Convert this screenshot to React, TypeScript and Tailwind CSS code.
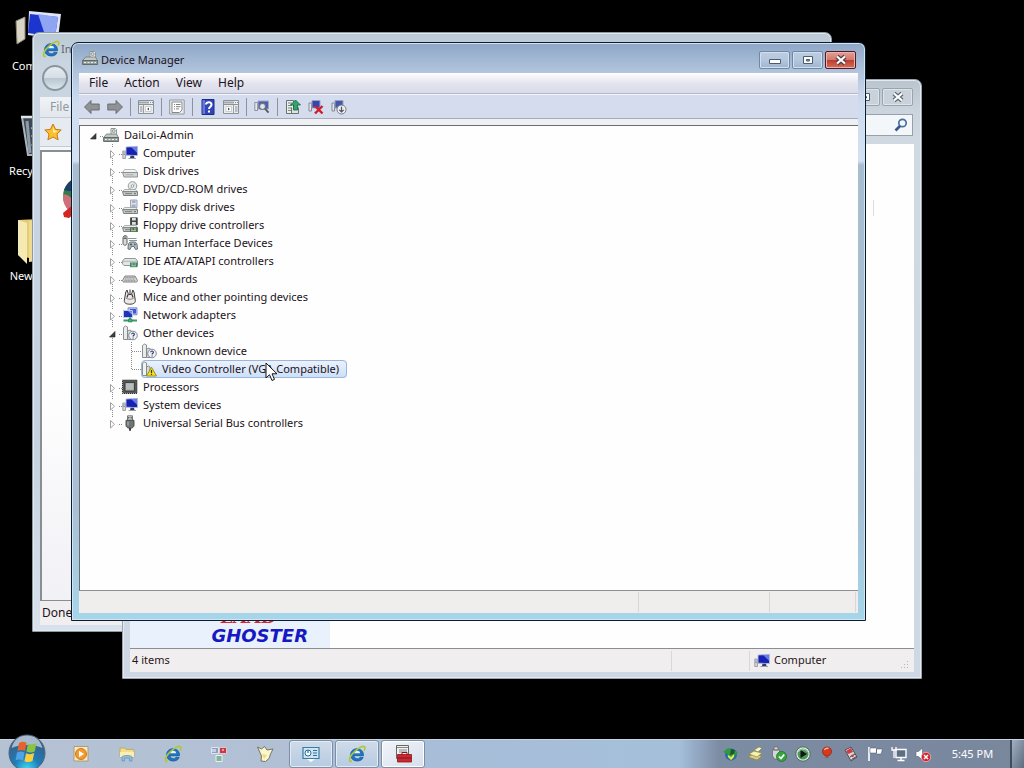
import React from 'react';

type IconProps = { className?: string };

/* ---------- Icons ---------- */

const MonitorIcon: React.FC<IconProps> = ({ className = 'w-4 h-4' }) => (
  <svg viewBox="0 0 16 16" className={className}>
    <path d="M.8 6h2.700v7.500H.8z" fill="#d5d8dc" stroke="#8b9198" strokeWidth="0.8" />
    <path d="M1.200 8h2M1.200 9.500h2" stroke="#777" strokeWidth="0.6" />
    <path d="M4 2l11.500-.6v9.200L4 10.200z" fill="#1522b4" stroke="#b4bddc" strokeWidth="0.9" />
    <path d="M9 2l6-.3v6z" fill="#7f92f0" opacity="0.8" />
    <path d="M8.500 10.700h3.500l.5 2.300H8z" fill="#2f3b66" />
    <path d="M6.500 13.500h7.500" stroke="#9aa0a8" />
  </svg>
);

const RootIcon: React.FC<IconProps> = ({ className = 'w-4 h-4' }) => (
  <svg viewBox="0 0 16 16" className={className}>
    <path d="M8 1.500h4.500l1 1v5H8z" fill="#eef0f0" stroke="#87908f" strokeWidth="0.9" />
    <circle cx="10.700" cy="4" r="1.500" fill="#dfe4cf" stroke="#6d7572" strokeWidth="0.7" />
    <path d="M3.500 7h10l2 3.500H.7z" fill="#c2c8c6" stroke="#6f7877" strokeWidth="0.8" />
    <path d="M.6 10.500h15v4H.6z" fill="#919b99" stroke="#5b6462" strokeWidth="0.9" />
    <path d="M2 12.500h2M5.500 12.500h2M9 12.500h2M12.500 12.500h1.500" stroke="#e9eeec" strokeWidth="1.200" />
  </svg>
);

const driveBody = (
  <>
    <path d="M2.500 8.500h11l2 2.200H.6z" fill="#eceeee" stroke="#9aa09f" strokeWidth="0.8" />
    <path d="M.6 10.700h14.900v3.800H1.600z" fill="#c8cdcc" stroke="#6f7675" strokeWidth="0.9" />
    <path d="M3 12.700h7" stroke="#767d7c" />
    <path d="M12 12.700h2" stroke="#55705c" />
  </>
);

const DiskIcon: React.FC = () => (
  <svg viewBox="0 0 16 16" className="w-4 h-4">
    <path d="M2.500 6.500h10.500l2.500 3H.6z" fill="#f4f4f4" stroke="#a5a9a9" strokeWidth="0.8" />
    <path d="M.6 9.500h14.900v4.500H2z" fill="#d3d6d6" stroke="#858a8a" strokeWidth="0.9" />
    <path d="M3.500 11.800h8" stroke="#a7abab" />
  </svg>
);

const DvdIcon: React.FC = () => (
  <svg viewBox="0 0 16 16" className="w-4 h-4">
    <circle cx="10.500" cy="5" r="4.300" fill="#e7eaea" stroke="#8c9393" strokeWidth="0.9" />
    <path d="M10.500 5l3-2.800M10.500 5l-2.500 3" stroke="#b4bcc0" />
    <circle cx="10.500" cy="5" r="1.300" fill="#fff" stroke="#7d8484" strokeWidth="0.7" />
    {driveBody}
  </svg>
);

const FloppyIcon: React.FC = () => (
  <svg viewBox="0 0 16 16" className="w-4 h-4">
    <path d="M8.500 1h6.500v7.500H8.500z" fill="#dfe3ef" stroke="#8a91a5" strokeWidth="0.8" />
    <path d="M10 1.500h3.500v2.500H10zM9.700 5.500h4v2.500h-4z" fill="#a5aec8" />
    {driveBody}
  </svg>
);

const FloppyControllerIcon: React.FC = () => (
  <svg viewBox="0 0 16 16" className="w-4 h-4">
    <path d="M8.500 .8h6.800v7H8.500z" fill="#3f4644" stroke="#222" strokeWidth="0.6" />
    <path d="M10 1h3.800v2.500H10zM10 5h3.800v2.800H10z" fill="#dde1df" />
    {driveBody}
    <path d="M8 10.500h7.500v4.500H8z" fill="#4f6d52" />
    <path d="M9 12h1.500M12 12h2M9 13.700h5" stroke="#c9d9c3" strokeWidth="0.9" />
  </svg>
);

const HidIcon: React.FC = () => (
  <svg viewBox="0 0 16 16" className="w-4 h-4">
    <path d="M1 3c0-1.500 1-2.500 2.500-2.500S5 2 5 3v5.500c0 1-.8 1.700-2 1.700S1 9.500 1 8.500z" fill="#d9dcdc" stroke="#4e5454" strokeWidth="0.9" />
    <path d="M1.500 3.500h3M3 1v3" stroke="#5e6464" />
    <path d="M6 3.500h8.500M7 5.500h8" stroke="#8e9595" strokeWidth="1.200" />
    <path d="M6 14c0-4 .5-7 3-7h3.500c2.500 0 3 3.500 3 7l-2 .5-1.500-3h-2.500l-1.500 3z" fill="#aeb9bf" stroke="#5b666b" strokeWidth="0.9" />
    <circle cx="9" cy="9.500" r="0.900" fill="#444" />
    <circle cx="12.800" cy="9.500" r="0.900" fill="#54697e" />
  </svg>
);

const IdeIcon: React.FC = () => (
  <svg viewBox="0 0 16 16" className="w-4 h-4">
    <path d="M2.500 5.500h11l2 2.500v4.500H2L.6 11V8z" fill="#e2e6e4" stroke="#868d8a" strokeWidth="0.9" />
    <path d="M1 8.300h14" stroke="#a4aaa7" strokeWidth="0.8" />
    <path d="M8 9.500h7.500v4.700H8z" fill="#3d8561" />
    <path d="M9.300 11h2M12.500 11h1.500M9.300 12.800h4.700" stroke="#cfe6d8" strokeWidth="0.800" />
  </svg>
);

const KeyboardIcon: React.FC = () => (
  <svg viewBox="0 0 16 16" className="w-4 h-4">
    <path d="M3 5h10l2.500 4.500c0 1-.7 1.500-1.500 1.500H2C1 11 .5 10.500.5 9.500z" fill="#d2d4d4" stroke="#777" strokeWidth="0.9" />
    <path d="M3.500 6.500h9M3 8h10M2.500 9.500h11" stroke="#777" strokeWidth="0.700" strokeDasharray="1 0.6" />
  </svg>
);

const MouseIcon: React.FC = () => (
  <svg viewBox="0 0 16 16" className="w-4 h-4">
    <path d="M5 1L3.800 3 2.300 11.500c-.3 2.300 1.700 3.700 5.500 3.700s5.800-1.400 5.500-3.700L12 3l-1.200-2L9.500 5.500h-3z" fill="#eceae8" stroke="#3f3c3a" strokeLinejoin="round" />
    <path d="M6 5.500l-1 3M10 5.500l1 3" stroke="#3f3c3a" strokeWidth="1.200" />
    <path d="M3.800 9c2.500 1.700 5.800 1.700 8 0" fill="none" stroke="#8a8583" />
    <path d="M8 .5v5" stroke="#333" />
  </svg>
);

const NetworkIcon: React.FC = () => (
  <svg viewBox="0 0 16 16" className="w-4 h-4">
    <path d="M6 .8h9v7H6z" fill="#b9c6ee" stroke="#7c8dc3" strokeWidth="0.9" />
    <path d="M8 2h6v4.500H8z" fill="#3d57d8" />
    <path d="M1.500 3.500h9v7h-9z" fill="#1f34b8" stroke="#c1cae6" />
    <path d="M6 4l4 .2v3.500z" fill="#8799ee" />
    <path d="M8 10.500v2.500M1.500 13.500h13.500" stroke="#3a9a63" strokeWidth="2" />
    <path d="M6.500 12h3.500v3H6.500z" fill="#3fb577" stroke="#25754b" strokeWidth="0.600" />
  </svg>
);

const UnknownIcon: React.FC = () => (
  <svg viewBox="0 0 16 16" className="w-4 h-4">
    <path d="M1.500 2.500l2-1.500 2 1v12.500h-4z" fill="#e9ebeb" stroke="#7f8585" strokeWidth="0.900" />
    <path d="M5.500 6l2.500-1 1.500 1v8.500H5.500z" fill="#d6d9d9" stroke="#7f8585" strokeWidth="0.900" />
    <circle cx="11" cy="10.500" r="4.300" fill="#eef1f6" stroke="#777f8c" strokeWidth="0.900" />
    <path d="M9.700 9.300c0-1.800 2.700-1.700 2.700 0 0 1-1.300 1-1.300 2.200M11.100 12.400v1" fill="none" stroke="#2f3c66" strokeWidth="1.100" />
  </svg>
);

const WarnIcon: React.FC = () => (
  <svg viewBox="0 0 16 16" className="w-4 h-4">
    <path d="M1.500 2.500l2-1.500 2 1v12.500h-4z" fill="#f2f2ea" stroke="#7f8585" strokeWidth="0.900" />
    <path d="M5.500 6l2-1 1.500 1v8.500H5.500z" fill="#d6d9d9" stroke="#7f8585" strokeWidth="0.900" />
    <path d="M10.500 6.200l5 8.800h-10z" fill="#f2e21c" stroke="#93881a" strokeWidth="0.900" strokeLinejoin="round" />
    <path d="M10.500 9v3.200M10.500 13v1.100" stroke="#3d3900" strokeWidth="1.200" />
  </svg>
);

const CpuIcon: React.FC = () => (
  <svg viewBox="0 0 16 16" className="w-4 h-4">
    <path d="M.5 1h14.500v13.500H.5z" fill="#565a58" />
    <path d="M.5 1h14.500v13.500H.5z" fill="none" stroke="#2d302e" strokeDasharray="1 1" />
    <path d="M3 3.500h9.500v8.500H3z" fill="#a4aaa8" stroke="#222" strokeWidth="0.700" />
    <path d="M4 4.500h7v6H4z" fill="#b8bebc" />
  </svg>
);

const UsbIcon: React.FC = () => (
  <svg viewBox="0 0 16 16" className="w-4 h-4">
    <path d="M5.500.8h5v4.500h-5z" fill="#d5d7d7" stroke="#666b6b" strokeWidth="0.900" />
    <path d="M6.800 2v1.500M9.200 2v1.500" stroke="#333" />
    <path d="M4 5.300h8v5c0 2-2 3-4 3s-4-1-4-3z" fill="#6f7574" stroke="#424746" strokeWidth="0.900" />
    <path d="M6 6.500v4" stroke="#b0b5b4" strokeWidth="1.200" />
    <path d="M8 13v2.800" stroke="#2d3130" strokeWidth="1.800" />
  </svg>
);

const IeIcon: React.FC<IconProps> = ({ className = 'w-4 h-4' }) => (
  <svg viewBox="0 0 16 16" className={className}>
    <path d="M13.800 9.500H5.300c.2 3 4.300 3.500 5.400 1.300l2.800.3c-1.500 4.700-11.200 4.400-11.200-2.500 0-7.200 12-7.400 11.500.9z" fill="#2076c4" stroke="#0b4f8d" strokeWidth="0.600" />
    <path d="M5.300 7.300h5.500c-.3-2.800-5-2.800-5.500 0z" fill="#e8f5ff" />
    <path d="M3.500 14.300C.6 15.500.6 12 3.500 8.300 7 4 12.700.2 14.500 1.500c1 .7.300 2.500-.4 3.500" fill="none" stroke="#b3c63a" strokeWidth="1.500" />
  </svg>
);

const Arrow: React.FC<{ flip?: boolean }> = ({ flip }) => (
  <svg viewBox="0 0 16 16" className="w-4 h-4">
    <path
      d={flip ? 'M15.500 8L9 1.500v3.500H.8v6H9v3.500z' : 'M.5 8L7 1.500v3.500h8.200v6H7v3.500z'}
      fill="#8f9395"
      stroke="#64686a"
      strokeWidth="0.900"
    />
  </svg>
);

const PaneIcon: React.FC<{ right?: boolean }> = ({ right }) => (
  <svg viewBox="0 0 16 16" className="w-4 h-4">
    <path d="M.5 1.500h15v13H.5z" fill="#eceded" stroke="#8c9196" />
    <path d="M1 3.500h10" stroke="#a3a8ad" strokeWidth="2" />
    <path d="M12 3.500h1M14 3.500h1" stroke="#8a9096" />
    <path d="M1 5.500h14" stroke="#8c9196" />
    <path d={right ? 'M10.500 6v8.500' : 'M5.500 6v8.500'} stroke="#9aa0a5" />
    <path d={right ? 'M12 8h2.500M12 10h2.500M12 12h2.500' : 'M2 8h2.500M2 10h2.500M2 12h2.500'} stroke="#8a9096" />
    <path d={right ? 'M3 7.500h5.500v5H3z' : 'M7.500 7.500h5.500v5H7.500z'} fill="#fff" stroke="#b0b5ba" strokeWidth="0.600" />
    <path d={right ? 'M5 8.500v3l2-1.500z' : 'M11 8.500v3L9 10z'} fill="#51575e" />
  </svg>
);

const PropsIcon: React.FC = () => (
  <svg viewBox="0 0 16 16" className="w-4 h-4">
    <path d="M.7 1h14.500v14H.7z" fill="#ececec" stroke="#94989c" />
    <path d="M3 3h10v8l-2.500 2.500H3z" fill="#fff" stroke="#85898e" />
    <path d="M5 5.500h1M7 5.500h4.500M5 7.700h1M7 7.700h4.500M5 9.900h1M7 9.900h3" stroke="#7d8287" />
  </svg>
);

const HelpIcon: React.FC = () => (
  <svg viewBox="0 0 16 16" className="w-4 h-4">
    <path d="M2 .5h12v15H2z" fill="#3346b8" stroke="#1d2b86" />
    <path d="M2.500 1h2.500v14H2.500z" fill="#6577d8" />
    <path d="M6 5.500c0-3 5.500-3 5.500.2 0 2-2.500 2-2.500 4.300M9 11.500v2" fill="none" stroke="#fff" strokeWidth="2" />
  </svg>
);

const ScanIcon: React.FC = () => (
  <svg viewBox="0 0 16 16" className="w-4 h-4">
    <path d="M.8 3.500h2.700v8H.8z" fill="#e5e6e8" stroke="#7b8087" strokeWidth="0.800" />
    <path d="M4 2h10.500v8H4z" fill="#4f5fae" stroke="#a1a8c4" />
    <circle cx="8.500" cy="7.500" r="3" fill="#e1e6ec" stroke="#72787d" strokeWidth="1.100" />
    <path d="M11 9.700l3.500 4" stroke="#555b60" strokeWidth="1.800" />
  </svg>
);

const UpdateIcon: React.FC = () => (
  <svg viewBox="0 0 16 16" className="w-4 h-4">
    <path d="M1.500 1.500h7v13h-7z" fill="#eceeee" stroke="#6b736f" />
    <path d="M3 4h4M3 6.500h4M3 9h4M3 11.500h4" stroke="#7c8681" />
    <path d="M6.500 8.500v6h7v-6" fill="#dbe5de" stroke="#5d6a62" strokeWidth="0.900" />
    <path d="M10.500 1l5 5h-3v5H8.500V6h-3z" fill="#2fa66f" stroke="#14633f" strokeWidth="0.800" />
  </svg>
);

const UninstallIcon: React.FC = () => (
  <svg viewBox="0 0 16 16" className="w-4 h-4">
    <path d="M1 4h2.500v8H1z" fill="#e5e6e8" stroke="#6f757c" strokeWidth="0.800" />
    <path d="M4 1.500h8v7.500H4z" fill="#3547a8" stroke="#9aa3c6" />
    <path d="M7 7l7.500 7.500M14.500 7L7 14.500" stroke="#cf1f2c" strokeWidth="2.400" />
  </svg>
);

const DisableIcon: React.FC = () => (
  <svg viewBox="0 0 16 16" className="w-4 h-4">
    <path d="M1 4h2.500v8H1z" fill="#e5e6e8" stroke="#6f757c" strokeWidth="0.800" />
    <path d="M4 1.500h8v7.500H4z" fill="#4656a8" stroke="#9aa3c6" />
    <circle cx="10.500" cy="10.500" r="4.500" fill="#eceef0" stroke="#777d84" />
    <path d="M10.500 7.800v5M8.300 10.800l2.200 2.200 2.200-2.200" fill="none" stroke="#50555b" strokeWidth="1.200" />
  </svg>
);

/* ---------- Device tree data ---------- */

type Device = {
  name: string;
  icon: React.FC;
  children?: { name: string; icon: React.FC; selected?: boolean }[];
};

const devices: Device[] = [
  { name: 'Computer', icon: MonitorIcon },
  { name: 'Disk drives', icon: DiskIcon },
  { name: 'DVD/CD-ROM drives', icon: DvdIcon },
  { name: 'Floppy disk drives', icon: FloppyIcon },
  { name: 'Floppy drive controllers', icon: FloppyControllerIcon },
  { name: 'Human Interface Devices', icon: HidIcon },
  { name: 'IDE ATA/ATAPI controllers', icon: IdeIcon },
  { name: 'Keyboards', icon: KeyboardIcon },
  { name: 'Mice and other pointing devices', icon: MouseIcon },
  { name: 'Network adapters', icon: NetworkIcon },
  {
    name: 'Other devices',
    icon: UnknownIcon,
    children: [
      { name: 'Unknown device', icon: UnknownIcon },
      { name: 'Video Controller (VGA Compatible)', icon: WarnIcon, selected: true }
    ]
  },
  { name: 'Processors', icon: CpuIcon },
  { name: 'System devices', icon: MonitorIcon },
  { name: 'Universal Serial Bus controllers', icon: UsbIcon }
];

type BranchKind = 'root' | 'open' | 'closed' | 'last' | 'leaf' | 'leafLast';

// expander arrow together with the dotted guide lines of its row
const Branch: React.FC<{ kind: BranchKind }> = ({ kind }) => (
  <svg viewBox="0 0 15 18" className="w-[15px] h-[18px] shrink-0" fill="none">
    {kind !== 'root' && (
      <path d={kind === 'leaf' ? 'M5.500 0v18' : kind === 'leafLast' ? 'M5.500 0v9' : 'M5.500 0v4'} stroke="#8a8a8a" strokeDasharray="1 1" />
    )}
    {(kind === 'open' || kind === 'closed') && <path d="M5.500 14v4" stroke="#8a8a8a" strokeDasharray="1 1" />}
    <path d={kind === 'leaf' || kind === 'leafLast' ? 'M6 9.500h9' : 'M12 10.500h3'} stroke="#8a8a8a" strokeDasharray="1 1" />
    {(kind === 'root' || kind === 'open') && <path d="M8 7.500v5.500H2.500z" fill="#3c3c3c" stroke="#222" strokeWidth="0.600" />}
    {(kind === 'closed' || kind === 'last') && <path d="M3.500 6.500v7.500l4-3.700z" fill="#fff" stroke="#a0a0a0" />}
  </svg>
);

const DeviceTree: React.FC = () => (
  <ul role="tree" className="pl-2 leading-[18px]">
    <li role="treeitem" aria-expanded="true">
      <div className="flex h-[18px] items-center">
        <Branch kind="root" />
        <RootIcon />
        <span className="pl-[5px]">DaiLoi-Admin</span>
      </div>
      <ul role="group" className="pl-[19px]">
        {devices.map((device, index) => (
          <li key={device.name} role="treeitem">
            <div className="flex h-[18px] items-center">
              <Branch kind={device.children ? 'open' : index === devices.length - 1 ? 'last' : 'closed'} />
              <device.icon />
              <span className="pl-[5px]">{device.name}</span>
            </div>
            {device.children && (
              <ul role="group">
                {device.children.map((child, i) => (
                  <li key={child.name} role="treeitem" aria-selected={!!child.selected} className="flex h-[18px] items-center">
                    <svg viewBox="0 0 19 18" className="w-[19px] h-[18px] shrink-0">
                      <path d="M5.500 0v18" stroke="#8a8a8a" strokeDasharray="1 1" />
                    </svg>
                    <Branch kind={i === device.children!.length - 1 ? 'leafLast' : 'leaf'} />
                    <span
                      className={
                        child.selected
                          ? 'flex h-[18px] items-center rounded-sm bg-gradient-to-b from-[#edf3fd] to-[#cbdff8] pr-2 outline -outline-offset-1 outline-[#9ab6dc]'
                          : 'flex h-[18px] items-center pr-2'
                      }
                    >
                      <child.icon />
                      <span className="pl-[5px]">{child.name}</span>
                    </span>
                  </li>
                ))}
              </ul>
            )}
          </li>
        ))}
      </ul>
    </li>
  </ul>
);

/* ---------- Windows ---------- */

const CloseGlyph: React.FC<{ stroke: string }> = ({ stroke }) => (
  <svg viewBox="0 0 14 12" className="w-[14px] h-3">
    <path d="M3 2.500l8 7M11 2.500l-8 7" stroke={stroke} strokeWidth="4.400" />
    <path d="M3 2.500l8 7M11 2.500l-8 7" stroke="#fff" strokeWidth="2.200" />
  </svg>
);

const MaxGlyph: React.FC = () => (
  <svg viewBox="0 0 14 12" className="w-[14px] h-3">
    <path d="M2.500 2.500h9v7h-9z" fill="#fff" stroke="#4a5c72" />
    <path d="M5.500 5.500h3v1.500h-3z" fill="#8ea6c0" stroke="#4a5c72" />
  </svg>
);

const toolbar: (null | { label: string; icon: React.ReactNode })[] = [
  { label: 'Back', icon: <Arrow /> },
  { label: 'Forward', icon: <Arrow flip /> },
  null,
  { label: 'Show/Hide Console Tree', icon: <PaneIcon /> },
  null,
  { label: 'Properties', icon: <PropsIcon /> },
  null,
  { label: 'Help', icon: <HelpIcon /> },
  { label: 'Show/Hide Action Pane', icon: <PaneIcon right /> },
  null,
  { label: 'Scan for hardware changes', icon: <ScanIcon /> },
  null,
  { label: 'Update Driver Software', icon: <UpdateIcon /> },
  { label: 'Uninstall', icon: <UninstallIcon /> },
  { label: 'Disable', icon: <DisableIcon /> }
];

const DeviceManager: React.FC = () => (
  <section
    aria-label="Device Manager"
    className="absolute top-[42px] right-[158px] bottom-[147px] left-[71px] flex flex-col rounded-t-[7px] border border-[#0c1c30] bg-[linear-gradient(to_bottom,#8ea7c6_0,#b2c5dd_30px,#cfdcf0_60px,#d3e1f4_118px,#a6bdd2_122px,#a9bfd3_80%,#a5d6ea_100%)] px-[7px] pb-[7px] shadow-[inset_0_0_0_1px_#d5e4f2]"
  >
    <header className="flex h-[30px] shrink-0 items-center pl-[3px]">
      <RootIcon />
      <h1 className="flex-1 pt-1 pl-[3px]">Device Manager</h1>
      <div className="flex gap-[2px] pt-1 pr-[2px]">
        <button aria-label="Minimize" className="flex h-[18px] w-[31px] items-center justify-center rounded-[2px] border border-[#7088a5] bg-gradient-to-b from-[#bccde1] via-[#b5c7dd] to-[#9db4d0] shadow-[inset_0_0_0_1px_#d3dfec]">
          <svg viewBox="0 0 14 12" className="w-[14px] h-3">
            <path d="M1.500 5.500h11v4h-11z" fill="#fff" stroke="#4a5c72" />
          </svg>
        </button>
        <button aria-label="Maximize" className="flex h-[18px] w-[31px] items-center justify-center rounded-[2px] border border-[#7088a5] bg-gradient-to-b from-[#bccde1] via-[#b5c7dd] to-[#9db4d0] shadow-[inset_0_0_0_1px_#d3dfec]">
          <MaxGlyph />
        </button>
        <button aria-label="Close" className="flex h-[18px] w-[31px] items-center justify-center rounded-[2px] border border-[#541a22] bg-[linear-gradient(to_bottom,#e3a097_0%,#d4786c_48%,#bd3d2e_52%,#d2705c_100%)] shadow-[inset_0_0_0_1px_#eab4ac]">
          <CloseGlyph stroke="#5a3a44" />
        </button>
      </div>
    </header>

    <nav className="flex h-[21px] shrink-0 items-center gap-4 border-b border-[#b4b8ca] bg-gradient-to-b from-white via-[#e4e4ee] to-[#d9dbe9] pl-[10px] text-xs">
      {['File', 'Action', 'View', 'Help'].map((item) => (
        <button key={item}>{item}</button>
      ))}
    </nav>

    <div className="flex h-[25px] shrink-0 items-center border-t border-b border-t-[#f4f6fb] border-b-[#a6abb8] bg-[#d5dcee] pl-px">
      {toolbar.map((tool, index) =>
        tool ? (
          <button key={index} aria-label={tool.label} className="flex h-[22px] w-[23px] items-center justify-center">
            {tool.icon}
          </button>
        ) : (
          <span key={index} className="flex w-2 justify-center">
            <span className="h-[18px] w-px bg-[#8d929c]" />
          </span>
        )
      )}
    </div>

    <div className="h-[6px] shrink-0 bg-[#eff0f3]" />

    <div className="min-h-0 flex-1 overflow-hidden border-t border-b border-l border-t-[#696c72] border-b-[#8c8e94] border-l-[#696c72] bg-[#fefefe]">
      <DeviceTree />
    </div>

    <footer className="flex h-[22px] shrink-0 bg-[#f0eded] py-px">
      <span className="flex-1 border-r border-[#d9d6d6]" />
      <span className="w-[131px] border-r border-[#d9d6d6]" />
      <span className="mr-[2px] w-[86px] border-r border-[#d9d6d6]" />
    </footer>
  </section>
);

const InternetExplorer: React.FC = () => (
  <section
    aria-label="Internet Explorer"
    className="absolute top-[32px] right-[192px] bottom-[136px] left-[32px] flex flex-col rounded-t-[7px] border border-[#8d99a3] bg-[linear-gradient(to_bottom,#bccad6_0,#c9d5e0_30px,#c6d3de_70%,#d8e1ec_100%)] px-[7px] pb-[6px] shadow-[inset_0_0_0_1px_#e2eaf0]"
  >
    <header className="flex h-8 shrink-0 items-center pl-[2px] text-[#5b6672]">
      <IeIcon className="h-[18px] w-[18px]" />
      <h2 className="w-8 truncate pl-px">Internet</h2>
    </header>
    <div className="h-8 shrink-0 pl-[2px]">
      <button aria-label="Back" className="h-[26px] w-[26px] rounded-full border-2 border-[#8b959e] bg-[linear-gradient(to_bottom,#e6ecf0_0%,#d5dee5_48%,#b9c6d0_52%,#dbe5ec_100%)]" />
    </div>
    <nav className="flex h-5 shrink-0 items-center bg-gradient-to-b from-[#f0f3f6] to-[#e2e7ed] pl-[10px] text-xs text-[#9097a0]">
      <button>File</button>
    </nav>
    <div className="flex h-[30px] shrink-0 items-center border-t border-b border-t-[#c3ccd4] border-b-[#c3ccd4] bg-[#e6ebf2] pl-1">
      <button aria-label="Favorites">
        <svg viewBox="0 0 18 18" className="h-[18px] w-[18px]">
          <path d="M9 1l2.500 5.300 5.700.7-4.200 4 1.100 5.800L9 14l-5.100 2.800L5 11 .8 7l5.700-.7z" fill="#fbc02c" stroke="#c9781a" strokeLinejoin="round" />
          <path d="M9 4l1.500 3.500 3 .5-3 2L9 9z" fill="#fff2a0" />
        </svg>
      </button>
    </div>
    <div className="h-[3px] shrink-0 bg-[#f4f6f8]" />
    <main className="min-h-0 flex-1 overflow-hidden border-t-2 border-b border-l-2 border-[#898e95] bg-gradient-to-b from-white via-white to-[#f1f1f6] pt-[24px] pl-[20px]">
      <svg viewBox="0 0 40 44" className="h-11 w-10">
        <circle cx="20" cy="20" r="19" fill="#2f7d4a" />
        <path d="M2 14C6 4 14 1 20 1v14H6z" fill="#1d3f6d" />
        <path d="M1 19c5-2 9 4 12 9l-5 7C2 31 1 25 1 19z" fill="#cf6f78" />
        <path d="M1 37l11-9 6 5-11 9-5-1z" fill="#d8241f" />
      </svg>
    </main>
    <footer className="flex h-6 shrink-0 items-center bg-[#f0eeee] pl-[2px] text-xs">Done</footer>
  </section>
);

const Explorer: React.FC = () => (
  <section
    aria-label="Computer"
    className="absolute top-[79px] right-[102px] bottom-[89px] left-[122px] flex flex-col rounded-t-[7px] border border-[#98a3ae] bg-[linear-gradient(to_bottom,#b9c4ce_0,#cbd4dc_30px,#d0d9e1_60px,#ced8e4_100%)] px-[7px] pb-[6px] shadow-[inset_0_0_0_1px_#e4eaf0]"
  >
    <header className="flex h-[34px] shrink-0 items-start justify-end gap-[2px] pt-2 pr-px">
      <button aria-label="Minimize" className="h-[18px] w-[31px] rounded-[2px] border border-[#98a3ae] bg-[#c9d2da]" />
      <button aria-label="Maximize" className="flex h-[18px] w-[31px] items-center justify-center rounded-[2px] border border-[#98a3ae] bg-[#c9d2da] shadow-[inset_0_0_0_1px_#dde4ea]">
        <MaxGlyph />
      </button>
      <button aria-label="Close" className="flex h-[18px] w-[31px] items-center justify-center rounded-[2px] border border-[#98a3ae] bg-[#c9d2da] shadow-[inset_0_0_0_1px_#dde4ea]">
        <CloseGlyph stroke="#5d6873" />
      </button>
    </header>
    <div className="flex h-[30px] shrink-0 justify-end pr-px">
      <label className="flex h-[22px] w-[200px] items-center border border-[#98a1ab] bg-[#f4f7fa] pr-1">
        <input type="search" aria-label="Search Computer" className="min-w-0 flex-1 outline-none" />
        <svg viewBox="0 0 14 14" className="h-[14px] w-[14px]" fill="none">
          <circle cx="8.500" cy="5" r="3.700" stroke="#4b6ea0" strokeWidth="1.700" />
          <path d="M6 8l-4.500 4.500" stroke="#35588c" strokeWidth="2.600" />
        </svg>
      </label>
    </div>
    <main className="flex min-h-0 flex-1 border-b border-[#8c8e94] bg-[#fefefe]">
      <aside className="flex w-[200px] flex-col items-end justify-end overflow-hidden bg-[#e9f2fc] pr-[22px] pb-[2px]">
        <span className="pr-8 font-['DejaVu_Serif'] text-[18px] leading-[18px] font-bold text-[#dd2233]">LAAD</span>
        <span className="font-['DejaVu_Sans'] text-[18px] leading-5 font-bold text-[#1618c4] italic">GHOSTER</span>
      </aside>
      <div className="flex flex-1 justify-end pt-14 pr-10">
        <span className="h-4 w-px bg-[#dcdcdc]" />
      </div>
    </main>
    <footer className="flex h-[23px] shrink-0 items-center bg-[#f0eeee] text-[#2a1520]">
      <span className="flex-1 pl-[2px]">4 items</span>
      <span className="h-5 w-[79px] border-x border-[#d9d7d7]" />
      <span className="flex w-[164px] items-center gap-1 pl-1">
        <MonitorIcon />
        <span className="flex-1">Computer</span>
        <svg viewBox="0 0 10 10" className="mt-2 mr-1 h-[10px] w-[10px]" fill="#b5b5b5">
          <path d="M7 1h1v1H7zM4 4h1v1H4zM7 4h1v1H7zM1 7h1v1H1zM4 7h1v1H4zM7 7h1v1H7z" />
        </svg>
      </span>
    </footer>
  </section>
);

/* ---------- Desktop icons ---------- */

const DesktopIcons: React.FC = () => (
  <ul className="absolute top-2 left-0 flex w-[76px] flex-col text-center text-white">
    <li className="flex h-[105px] flex-col items-center">
      <svg viewBox="0 0 48 48" className="h-12 w-12">
        <path d="M2 13l9-4v22l-8 5z" fill="#d9d4c6" stroke="#8b8677" />
        <path d="M15 3l32 3-3 25-30-4z" fill="#dfe5f7" />
        <path d="M16 6l28 3-3 20-27-4z" fill="#1c35cf" />
        <path d="M24 6l20 3-3 20-10-2z" fill="#8fa4f2" />
      </svg>
      <span className="leading-5">Computer</span>
    </li>
    <li className="flex h-[105px] flex-col items-center">
      <svg viewBox="0 0 48 48" className="h-12 w-12">
        <path d="M8 4h34l-6 38H14z" fill="#3d4854" stroke="#a9b4bc" strokeWidth="2" />
        <path d="M13 8l3 32" stroke="#8e9ca8" strokeWidth="3" />
        <path d="M18 14l3 4M18 22l4 4M18 31l4 3" stroke="#9fc0e0" strokeWidth="3" />
        <path d="M7 4h36" stroke="#dfe6ea" strokeWidth="2.500" />
      </svg>
      <span className="leading-5">Recycle Bin</span>
    </li>
    <li className="flex h-[105px] flex-col items-center">
      <svg viewBox="0 0 48 48" className="h-12 w-12">
        <path d="M4 2l22-1v42L4 37z" fill="#e3cc78" />
        <path d="M4 2l9 3v41L4 37z" fill="#f5e9b4" />
        <path d="M15 3h24v38l-24 3z" fill="#eedb90" />
      </svg>
      <span className="leading-5">New folder</span>
    </li>
  </ul>
);

/* ---------- Taskbar ---------- */

const quickLaunch = [
  {
    label: 'Windows Media Player',
    icon: (
      <svg viewBox="0 0 18 18" className="h-[18px] w-[18px]">
        <path d="M2 1.500h14v14.500H2z" fill="#f3e8d0" stroke="#b49a6b" />
        <circle cx="9" cy="9" r="5.500" fill="#f29a2c" stroke="#d07a18" />
        <path d="M7 5.800l5 3.200-5 3.200z" fill="#fff" />
      </svg>
    )
  },
  {
    label: 'Windows Explorer',
    icon: (
      <svg viewBox="0 0 18 18" className="h-[18px] w-[18px]">
        <path d="M2 3h5l1 1.500h8V12H2z" fill="#f3dd86" stroke="#b9a35c" strokeWidth="0.800" />
        <path d="M2 7h14v5H2z" fill="#fbeeb0" />
        <path d="M4 16v-4c0-2 10-2 10 0v4h-2.500v-3h-5v3z" fill="#8fc0e0" stroke="#5b90b8" strokeWidth="0.700" />
      </svg>
    )
  },
  { label: 'Internet Explorer', icon: <IeIcon className="h-[18px] w-[18px]" /> },
  {
    label: 'Switcher',
    icon: (
      <svg viewBox="0 0 18 18" className="h-[18px] w-[18px]">
        <path d="M1.500 2.500h7v6h-7z" fill="#8f9fc4" stroke="#dfe4ee" />
        <path d="M9.500 2.500h7v6h-7z" fill="#c63a4a" stroke="#dfc4cc" />
        <path d="M6 10.500h6v6H6z" fill="#86b39a" stroke="#e8f2ec" />
        <path d="M3 4v3M5 4v3M13 4v2" stroke="#fff" />
      </svg>
    )
  },
  {
    label: 'Bird',
    icon: (
      <svg viewBox="0 0 18 18" className="h-[18px] w-[18px]">
        <path d="M1.500 2l4 2 3-2.500 2.500 3.500 6-1-2.500 5-1.500 4.500-3.500 3-4.500-.5.500-5z" fill="#fbf6cf" stroke="#6d6b52" strokeWidth="0.900" />
        <path d="M6 9l5 1-3 4z" fill="#f0dc7a" />
      </svg>
    )
  }
];

const runningTasks = [
  {
    label: 'Control Panel',
    active: false,
    icon: (
      <svg viewBox="0 0 20 20" className="h-5 w-5">
        <path d="M2 3.500h16v11H2z" fill="#cfe4f2" stroke="#3a7ca5" strokeWidth="1.200" />
        <circle cx="7" cy="9" r="3" fill="#f4fafe" stroke="#2f7099" />
        <path d="M7 9V6M12 6.500h4M12 9h4M12 11.500h4" stroke="#2f7099" strokeWidth="1.200" />
        <path d="M6 15l4 3 4-3z" fill="#fff" />
      </svg>
    )
  },
  { label: 'Internet Explorer', active: false, icon: <IeIcon className="h-[18px] w-[18px]" /> },
  {
    label: 'Device Manager',
    active: true,
    icon: (
      <svg viewBox="0 0 20 20" className="h-5 w-5">
        <path d="M3.500 1.500h12v13h-12z" fill="#f0f0f0" stroke="#666" />
        <path d="M4 3.500h11M6 6h8M6 8h8" stroke="#888" />
        <path d="M4.500 10.500h14v7.500h-14z" fill="#c82a30" stroke="#8d1218" strokeWidth="0.800" />
        <path d="M9 10.500v-2h5v2M5 14h13" fill="none" stroke="#8d1218" />
      </svg>
    )
  }
];

const trayIcons = [
  <>
    <circle cx="8" cy="8.500" r="6" fill="#2d69b3" />
    <path d="M0 6l5-4 4 2 6 2-3 4-4 5-4-5 1-2z" fill="#2f9a41" />
    <path d="M8 3l4 1-1 4-4 1z" fill="#1c5a2a" />
    <path d="M5 9l3 2 3-3v3l-3 3-3-3z" fill="#e8e44d" />
  </>,
  <>
    <path d="M1 11l5-3 9 2-5 4z" fill="#d9cf7e" stroke="#8d8242" strokeWidth="0.700" />
    <path d="M2 8l5-3 8 2-5 4z" fill="#f4efb4" stroke="#8d8242" strokeWidth="0.700" />
    <path d="M7 4l5-3 3 1-4 4z" fill="#faf6cf" stroke="#8d8242" strokeWidth="0.700" />
  </>,
  <>
    <path d="M3 1h4v3H3zM1.500 4h7v6l-2 3h-3l-2-3z" fill="#d4d7d8" stroke="#666" strokeWidth="0.700" />
    <circle cx="10.500" cy="10.500" r="5" fill="#36a53d" stroke="#1b6b21" strokeWidth="0.700" />
    <path d="M8 10.500l2 2 3.200-4" fill="none" stroke="#fff" strokeWidth="1.700" />
  </>,
  <>
    <circle cx="8" cy="8" r="7.200" fill="#e3ece3" stroke="#4f6c55" />
    <circle cx="8" cy="8" r="5.500" fill="#4f9560" />
    <path d="M5.500 4l6.500 4-6.500 4z" fill="#0c1a10" />
    <path d="M3.500 6c1-3 7-4 9 0" fill="none" stroke="#a9d9b2" />
  </>,
  <>
    <circle cx="8" cy="5.500" r="4.500" fill="#d9381d" stroke="#86200f" strokeWidth="0.700" />
    <path d="M5.500 4a3 3 0 0 1 4-1.500" fill="none" stroke="#ffb49c" strokeWidth="1.400" />
    <path d="M6.500 10h3v2h-3z" fill="#8e5a48" />
  </>,
  <>
    <path d="M2 4l6-3 6 10-6 4z" fill="#d8d5d8" stroke="#4a4448" strokeWidth="0.900" />
    <path d="M3 5l5-3 2 4-5 2z" fill="#d03a44" />
    <path d="M7 11l5-3M8.500 13.500l5-3" stroke="#4a4448" />
    <circle cx="9.500" cy="9.700" r="1.300" fill="#c93640" />
  </>,
  <>
    <path d="M2 1v14" stroke="#fff" strokeWidth="1.600" />
    <path d="M3 2h6l1 1h5.500l-1.500 5h-4L9 7H3z" fill="#fff" stroke="#48566a" strokeWidth="0.500" />
    <path d="M9.500 3v4" stroke="#5c6b80" />
  </>,
  <>
    <path d="M5 3.500h10v8H5z" fill="#5d6d82" stroke="#fff" strokeWidth="1.400" />
    <path d="M10 12v2M6.500 14.500h7" stroke="#fff" strokeWidth="1.400" />
    <path d="M1 1v3h4V1M3 4v8" fill="none" stroke="#fff" strokeWidth="1.300" />
  </>,
  <>
    <path d="M1 5.500h2.500L7.500 2v12l-4-3.500H1z" fill="#fff" stroke="#55617a" strokeWidth="0.600" />
    <circle cx="11" cy="11" r="4.700" fill="#d3252d" stroke="#f3c9cb" strokeWidth="0.700" />
    <path d="M9 9l4 4M13 9l-4 4" stroke="#fff" strokeWidth="1.500" />
  </>
];

const Taskbar: React.FC = () => (
  <footer className="relative flex h-[29px] items-stretch border-t border-[#c9d3de] bg-[linear-gradient(to_right,#b5c2d4_0,#b1c0d5_280px,#a7bdd8_430px,#a5bfdb_calc(100%-345px),#7c8ca3_calc(100%-305px),#79879d_100%)]">
    <button aria-label="Start" className="absolute bottom-[-4px] left-2 h-[38px] w-[38px]">
      <svg viewBox="0 0 38 38" className="h-[38px] w-[38px]">
        <defs>
          <radialGradient id="orb" cx="50%" cy="95%" r="90%">
            <stop offset="0" stopColor="#3fdcf8" />
            <stop offset="0.400" stopColor="#1f7db8" />
            <stop offset="1" stopColor="#40597a" />
          </radialGradient>
        </defs>
        <circle cx="19" cy="19" r="18" fill="url(#orb)" stroke="#4c6480" />
        <path d="M3.500 14C6 5 12 1.500 19 1.500S32 5 34.500 14c-8-4-23-4-31 0z" fill="#ccd8e6" opacity="0.750" />
        <path d="M11 9c3-1.500 5-1.500 7.500-.2L17 17c-2.500-1.300-5-1.200-7.500 0z" fill="#e9622c" />
        <path d="M20 9.500c2.500 1.200 5 1.200 8.500-.2L26.700 17.500c-2.700 1.400-5.400 1.300-8.200.2z" fill="#8cc342" />
        <path d="M9 18.500c2.500-1.200 5-1.300 7.500 0L15 26.500c-2.500-1.300-5-1.200-7.500 0z" fill="#4fa3e6" />
        <path d="M18 19.300c2.700 1.200 5.400 1.200 8.200-.2L24.500 27c-2.700 1.400-5.400 1.400-8 .2z" fill="#fbcf3a" />
      </svg>
    </button>

    <nav className="flex flex-1 pl-[58px]">
      {quickLaunch.map((app) => (
        <button key={app.label} aria-label={app.label} className="flex w-[46px] items-center justify-center">
          {app.icon}
        </button>
      ))}
      {runningTasks.map((task) => (
        <span key={task.label} className="flex w-[46px] justify-center">
          <button
            aria-label={task.label}
            className={
              task.active
                ? 'flex w-11 items-center justify-center rounded-[3px] border border-[#7c8fa6] bg-gradient-to-br from-[#f2f5f9] to-[#d5dfec] shadow-[inset_0_0_0_1px_#fff]'
                : 'flex w-11 items-center justify-center rounded-[3px] border border-[#7c8fa6] bg-gradient-to-b from-[#cfdbe9] to-[#b7cbe2] shadow-[inset_0_0_0_1px_#e3ebf4]'
            }
          >
            {task.icon}
          </button>
        </span>
      ))}
    </nav>

    <div className="flex items-center">
      {trayIcons.map((icon, index) => (
        <span key={index} className="flex w-6 justify-center">
          <svg viewBox="0 0 16 16" className="h-4 w-4">
            {icon}
          </svg>
        </span>
      ))}
    </div>
    <time className="flex w-[75px] items-center justify-center text-white">5:45 PM</time>
    <button aria-label="Show desktop" className="w-[14px] border-l-2 border-[#3f4d60] bg-gradient-to-br from-[#a2b0c2] to-[#5e6c80]" />
  </footer>
);

const App: React.FC = () => {
  return (
    <div className="flex h-screen flex-col overflow-hidden bg-black font-['Noto_Sans',sans-serif] text-[11px] text-[#1c1220] select-none">
      <div className="min-h-0 flex-1">
        <DesktopIcons />
        <InternetExplorer />
        <Explorer />
        <DeviceManager />

        {/* Mouse pointer */}
        <svg viewBox="0 0 13 20" className="absolute top-[362px] left-[265px] h-5 w-[13px]">
          <path d="M1 1v15l3.500-3.300L7 18.500l2.500-1.100L7 11.800h5z" fill="#fff" stroke="#111" />
        </svg>
      </div>
      <Taskbar />
    </div>
  );
};

export default App;
